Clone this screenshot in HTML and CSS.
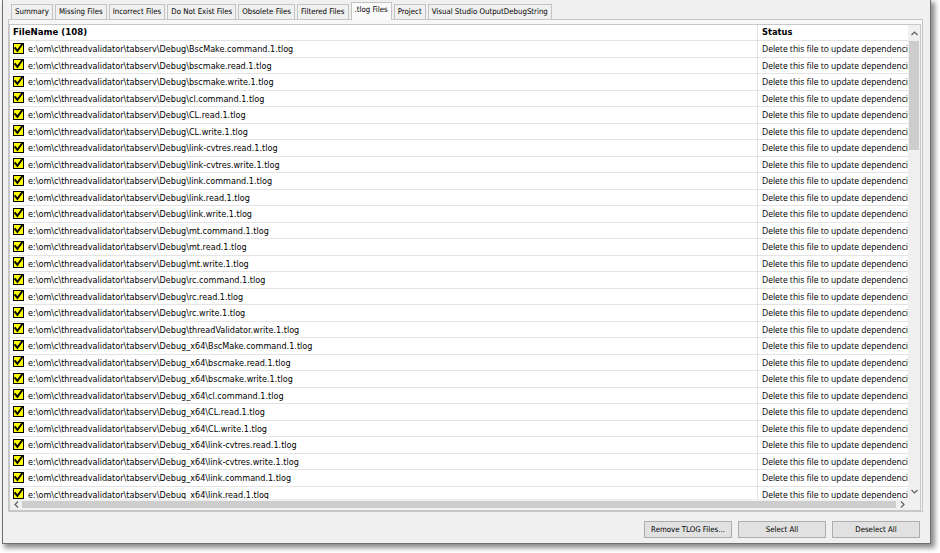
FILE: index.html
```html
<!DOCTYPE html>
<html>
<head>
<meta charset="utf-8">
<link rel="stylesheet" href="styles.css">
</head>
<body>
<svg class="defs" width="0" height="0">
  <symbol id="chk" viewBox="0 0 11 11">
    <rect x="0.5" y="0.5" width="10" height="10" fill="#ffff00" stroke="#000" stroke-width="1"/>
    <path d="M2.2 5.2 L4.4 7.8 L8.8 1.8" fill="none" stroke="#000" stroke-width="2" stroke-linecap="square" stroke-linejoin="miter"/>
  </symbol>
</svg>
<div class="screen">
  <div class="window">
    <div class="tabs">
      <div class="tab">Summary</div>
      <div class="tab">Missing Files</div>
      <div class="tab">Incorrect Files</div>
      <div class="tab">Do Not Exist Files</div>
      <div class="tab">Obsolete Files</div>
      <div class="tab">Filtered Files</div>
      <div class="tab sel">.tlog Files</div>
      <div class="tab">Project</div>
      <div class="tab">Visual Studio OutputDebugString</div>
    </div>
    <div class="panel">
      <div class="list">
        <div class="content">
          <div class="head">
            <div class="hcell c1">FileName (108)</div>
            <div class="hcell c2">Status</div>
          </div>
          <div class="row"><div class="cell c1"><svg class="cb"><use href="#chk"/></svg><span>e:\om\c\threadvalidator\tabserv\Debug\BscMake.command.1.tlog</span></div><div class="cell c2">Delete this file to update dependencies</div></div>
          <div class="row"><div class="cell c1"><svg class="cb"><use href="#chk"/></svg><span>e:\om\c\threadvalidator\tabserv\Debug\bscmake.read.1.tlog</span></div><div class="cell c2">Delete this file to update dependencies</div></div>
          <div class="row"><div class="cell c1"><svg class="cb"><use href="#chk"/></svg><span>e:\om\c\threadvalidator\tabserv\Debug\bscmake.write.1.tlog</span></div><div class="cell c2">Delete this file to update dependencies</div></div>
          <div class="row"><div class="cell c1"><svg class="cb"><use href="#chk"/></svg><span>e:\om\c\threadvalidator\tabserv\Debug\cl.command.1.tlog</span></div><div class="cell c2">Delete this file to update dependencies</div></div>
          <div class="row"><div class="cell c1"><svg class="cb"><use href="#chk"/></svg><span>e:\om\c\threadvalidator\tabserv\Debug\CL.read.1.tlog</span></div><div class="cell c2">Delete this file to update dependencies</div></div>
          <div class="row"><div class="cell c1"><svg class="cb"><use href="#chk"/></svg><span>e:\om\c\threadvalidator\tabserv\Debug\CL.write.1.tlog</span></div><div class="cell c2">Delete this file to update dependencies</div></div>
          <div class="row"><div class="cell c1"><svg class="cb"><use href="#chk"/></svg><span>e:\om\c\threadvalidator\tabserv\Debug\link-cvtres.read.1.tlog</span></div><div class="cell c2">Delete this file to update dependencies</div></div>
          <div class="row"><div class="cell c1"><svg class="cb"><use href="#chk"/></svg><span>e:\om\c\threadvalidator\tabserv\Debug\link-cvtres.write.1.tlog</span></div><div class="cell c2">Delete this file to update dependencies</div></div>
          <div class="row"><div class="cell c1"><svg class="cb"><use href="#chk"/></svg><span>e:\om\c\threadvalidator\tabserv\Debug\link.command.1.tlog</span></div><div class="cell c2">Delete this file to update dependencies</div></div>
          <div class="row"><div class="cell c1"><svg class="cb"><use href="#chk"/></svg><span>e:\om\c\threadvalidator\tabserv\Debug\link.read.1.tlog</span></div><div class="cell c2">Delete this file to update dependencies</div></div>
          <div class="row"><div class="cell c1"><svg class="cb"><use href="#chk"/></svg><span>e:\om\c\threadvalidator\tabserv\Debug\link.write.1.tlog</span></div><div class="cell c2">Delete this file to update dependencies</div></div>
          <div class="row"><div class="cell c1"><svg class="cb"><use href="#chk"/></svg><span>e:\om\c\threadvalidator\tabserv\Debug\mt.command.1.tlog</span></div><div class="cell c2">Delete this file to update dependencies</div></div>
          <div class="row"><div class="cell c1"><svg class="cb"><use href="#chk"/></svg><span>e:\om\c\threadvalidator\tabserv\Debug\mt.read.1.tlog</span></div><div class="cell c2">Delete this file to update dependencies</div></div>
          <div class="row"><div class="cell c1"><svg class="cb"><use href="#chk"/></svg><span>e:\om\c\threadvalidator\tabserv\Debug\mt.write.1.tlog</span></div><div class="cell c2">Delete this file to update dependencies</div></div>
          <div class="row"><div class="cell c1"><svg class="cb"><use href="#chk"/></svg><span>e:\om\c\threadvalidator\tabserv\Debug\rc.command.1.tlog</span></div><div class="cell c2">Delete this file to update dependencies</div></div>
          <div class="row"><div class="cell c1"><svg class="cb"><use href="#chk"/></svg><span>e:\om\c\threadvalidator\tabserv\Debug\rc.read.1.tlog</span></div><div class="cell c2">Delete this file to update dependencies</div></div>
          <div class="row"><div class="cell c1"><svg class="cb"><use href="#chk"/></svg><span>e:\om\c\threadvalidator\tabserv\Debug\rc.write.1.tlog</span></div><div class="cell c2">Delete this file to update dependencies</div></div>
          <div class="row"><div class="cell c1"><svg class="cb"><use href="#chk"/></svg><span>e:\om\c\threadvalidator\tabserv\Debug\threadValidator.write.1.tlog</span></div><div class="cell c2">Delete this file to update dependencies</div></div>
          <div class="row"><div class="cell c1"><svg class="cb"><use href="#chk"/></svg><span>e:\om\c\threadvalidator\tabserv\Debug_x64\BscMake.command.1.tlog</span></div><div class="cell c2">Delete this file to update dependencies</div></div>
          <div class="row"><div class="cell c1"><svg class="cb"><use href="#chk"/></svg><span>e:\om\c\threadvalidator\tabserv\Debug_x64\bscmake.read.1.tlog</span></div><div class="cell c2">Delete this file to update dependencies</div></div>
          <div class="row"><div class="cell c1"><svg class="cb"><use href="#chk"/></svg><span>e:\om\c\threadvalidator\tabserv\Debug_x64\bscmake.write.1.tlog</span></div><div class="cell c2">Delete this file to update dependencies</div></div>
          <div class="row"><div class="cell c1"><svg class="cb"><use href="#chk"/></svg><span>e:\om\c\threadvalidator\tabserv\Debug_x64\cl.command.1.tlog</span></div><div class="cell c2">Delete this file to update dependencies</div></div>
          <div class="row"><div class="cell c1"><svg class="cb"><use href="#chk"/></svg><span>e:\om\c\threadvalidator\tabserv\Debug_x64\CL.read.1.tlog</span></div><div class="cell c2">Delete this file to update dependencies</div></div>
          <div class="row"><div class="cell c1"><svg class="cb"><use href="#chk"/></svg><span>e:\om\c\threadvalidator\tabserv\Debug_x64\CL.write.1.tlog</span></div><div class="cell c2">Delete this file to update dependencies</div></div>
          <div class="row"><div class="cell c1"><svg class="cb"><use href="#chk"/></svg><span>e:\om\c\threadvalidator\tabserv\Debug_x64\link-cvtres.read.1.tlog</span></div><div class="cell c2">Delete this file to update dependencies</div></div>
          <div class="row"><div class="cell c1"><svg class="cb"><use href="#chk"/></svg><span>e:\om\c\threadvalidator\tabserv\Debug_x64\link-cvtres.write.1.tlog</span></div><div class="cell c2">Delete this file to update dependencies</div></div>
          <div class="row"><div class="cell c1"><svg class="cb"><use href="#chk"/></svg><span>e:\om\c\threadvalidator\tabserv\Debug_x64\link.command.1.tlog</span></div><div class="cell c2">Delete this file to update dependencies</div></div>
          <div class="row"><div class="cell c1"><svg class="cb"><use href="#chk"/></svg><span>e:\om\c\threadvalidator\tabserv\Debug_x64\link.read.1.tlog</span></div><div class="cell c2">Delete this file to update dependencies</div></div>
        </div>
        <div class="vscroll">
          <div class="arrow"><svg width="7" height="5" viewBox="0 0 7 5"><polyline points="0.5,4 3.5,1 6.5,4" fill="none" stroke="#606060" stroke-width="1.2"/></svg></div>
          <div class="vthumb"></div>
          <div class="vtrack"></div>
          <div class="arrow"><svg width="7" height="5" viewBox="0 0 7 5"><polyline points="0.5,1 3.5,4 6.5,1" fill="none" stroke="#606060" stroke-width="1.2"/></svg></div>
        </div>
        <div class="hscroll">
          <div class="harrow"><svg width="5" height="7" viewBox="0 0 5 7"><polyline points="4,0.5 1,3.5 4,6.5" fill="none" stroke="#606060" stroke-width="1.2"/></svg></div>
          <div class="hthumb"></div>
          <div class="harrow"><svg width="5" height="7" viewBox="0 0 5 7"><polyline points="1,0.5 4,3.5 1,6.5" fill="none" stroke="#606060" stroke-width="1.2"/></svg></div>
        </div>
        <div class="corner"></div>
      </div>
    </div>
    <div class="buttons">
      <div class="btn">Remove TLOG Files...</div>
      <div class="btn">Select All</div>
      <div class="btn">Deselect All</div>
    </div>
  </div>
</div>
</body>
</html>
```
FILE: styles.css
```css
* { box-sizing: border-box; }
html, body { margin: 0; padding: 0; }
body {
  width: 940px;
  height: 553px;
  overflow: hidden;
  background: #ffffff;
  font-family: "DejaVu Sans Condensed", "DejaVu Sans", sans-serif;
  font-stretch: condensed;
  color: #000;
}
.defs { position: absolute; width: 0; height: 0; }
.screen {
  width: 940px;
  height: 553px;
  padding-left: 2px;
}
.window {
  width: 929px;
  height: 544px;
  background: #f0f0f0;
  border: 1px solid #707070;
  border-top: none;
  box-shadow: 3px 3px 5px 1px rgba(0, 0, 0, 0.45);
  display: flex;
  flex-direction: column;
}
.tabs {
  height: 19px;
  flex: none;
  padding: 2px 0 0 8px;
  display: flex;
  align-items: flex-end;
  gap: 2px;
  position: relative;
  z-index: 1;
}
.tab {
  height: 15px;
  padding: 0 3px;
  border: 1px solid #c4c4c4;
  border-bottom: none;
  background: #f0f0f0;
  font-size: 7.8px;
  line-height: 13px;
  white-space: nowrap;
}
.tab.sel {
  height: 18px;
  margin-bottom: -1px;
  background: #fbfbfb;
  line-height: 14px;
}
.panel {
  flex: none;
  margin-left: 5px;
  width: 915px;
  height: 493px;
  border: 1px solid #c6c6c6;
  background: #f7f7f7;
  padding: 4px 1px 0 0;
}
.list {
  height: 100%;
  border: 1px solid #c8c8c8;
  background: #fff;
  display: grid;
  grid-template-columns: 898px 12px;
  grid-template-rows: 1fr 11px;
}
.content {
  overflow: hidden;
  min-height: 0;
}
.head, .row {
  display: grid;
  grid-template-columns: 748px 150px;
}
.head { height: 16px; }
.hcell {
  font-family: "DejaVu Sans", sans-serif;
  font-stretch: normal;
  font-weight: 700;
  font-size: 8.6px;
  line-height: 15px;
  border-bottom: 1px solid #e2e2e2;
  white-space: nowrap;
}
.hcell.c1 { padding-left: 3px; border-right: 1px solid #e2e2e2; }
.hcell.c2 { padding-left: 4px; font-size: 8.3px; }
.row { height: 16.5px; }
.cell {
  border-bottom: 1px solid #e4e4e4;
  overflow: hidden;
  white-space: nowrap;
}
.cell.c1 {
  display: flex;
  align-items: flex-start;
  gap: 4px;
  padding-left: 3px;
  border-right: 1px solid #e4e4e4;
  font-size: 9px;
  line-height: 15px;
  padding-top: 1px;
}
.cb {
  width: 11px;
  height: 11px;
  flex: none;
  margin-top: 0.5px;
}
.cell.c2 {
  padding-left: 4px;
  font-family: "Open Sans", sans-serif;
  font-stretch: normal;
  font-size: 8.5px;
  line-height: 15.5px;
}
.vscroll {
  background: #f0f0f0;
  display: flex;
  flex-direction: column;
  min-height: 0;
}
.arrow {
  height: 16px;
  flex: none;
  display: flex;
  align-items: center;
  justify-content: center;
}
.vthumb {
  height: 109px;
  flex: none;
  margin: 0 1px;
  background: #cdcdcd;
}
.vtrack { flex: 1; }
.hscroll {
  background: #f0f0f0;
  display: flex;
  align-items: stretch;
}
.harrow {
  width: 12px;
  flex: none;
  display: flex;
  align-items: center;
  justify-content: center;
}
.hthumb {
  flex: 1;
  margin: 2px 0;
  background: #cdcdcd;
}
.corner { background: #f0f0f0; }
.buttons {
  flex: none;
  margin-top: 9px;
  height: 17px;
  display: flex;
  justify-content: flex-end;
  gap: 6px;
  padding-right: 10px;
}
.btn {
  width: 88px;
  height: 17px;
  border: 1px solid #adadad;
  background: #e1e1e1;
  font-size: 7.8px;
  line-height: 15px;
  text-align: center;
  white-space: nowrap;
}
```
